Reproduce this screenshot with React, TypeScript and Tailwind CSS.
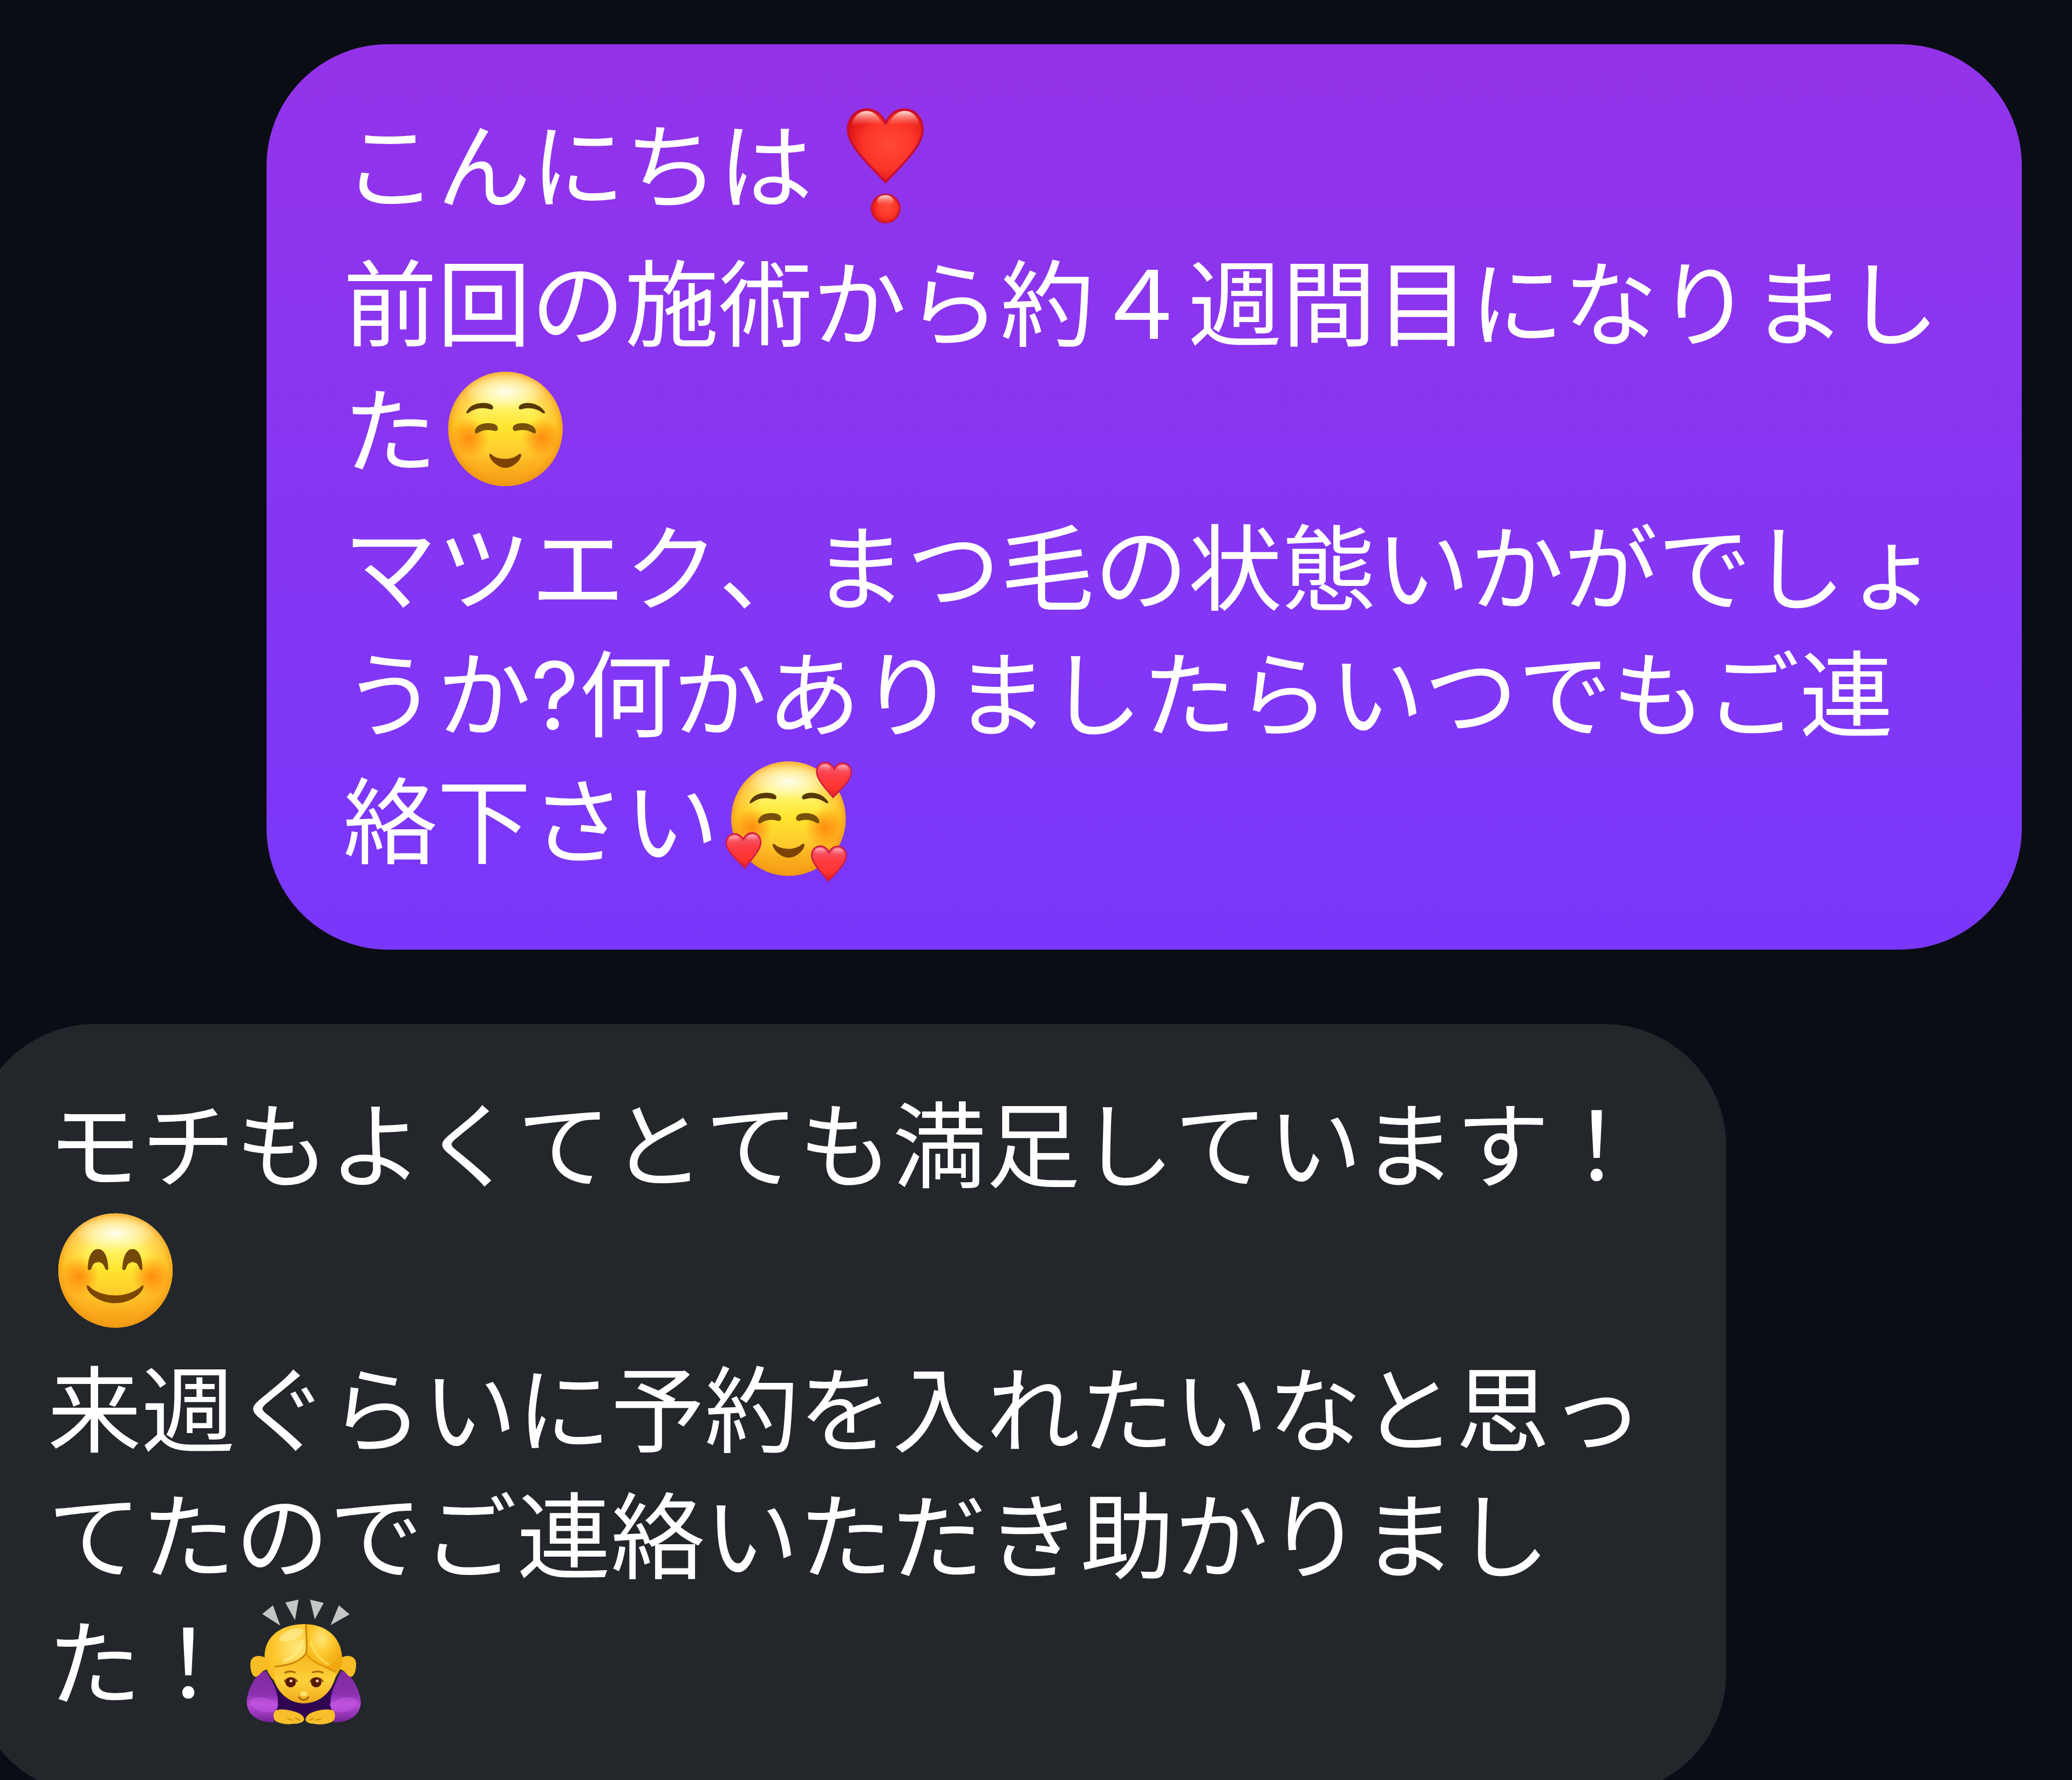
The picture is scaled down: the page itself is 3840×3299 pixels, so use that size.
import type { ReactNode } from "react";

const HEART = "M0 -62 C-14 -92 -42 -102 -64 -94 C-92 -84 -102 -54 -92 -24 C-80 14 -30 60 0 96 C30 60 80 14 92 -24 C102 -54 92 -84 64 -94 C42 -102 14 -92 0 -62 Z";

function Emoji({ label, viewBox, children }: { label: string; viewBox: string; children: ReactNode }) {
  return (
    <svg role="img" aria-label={label} viewBox={viewBox} className="inline-block size-64 align-[-75px] overflow-visible">
      {children}
    </svg>
  );
}

/* 顔の土台（グラデーション + ほっぺ） */
function Face({ id, cx, cy, cheekY }: { id: string; cx: number; cy: number; cheekY: number }) {
  return (
    <>
      <defs>
        <linearGradient id={`${id}-base`} x1="0" y1="0" x2="0" y2="1">
          <stop offset="0" stopColor="#fff2a0" />
          <stop offset="0.12" stopColor="#fff8b4" />
          <stop offset="0.3" stopColor="#fff46a" />
          <stop offset="0.48" stopColor="#ffe62e" />
          <stop offset="0.75" stopColor="#ffc62c" />
          <stop offset="1" stopColor="#e8960c" />
        </linearGradient>
        <radialGradient id={`${id}-edge`} cx="0.5" cy="0.48" r="0.52">
          <stop offset="0.5" stopColor="#ffa51a" stopOpacity="0" />
          <stop offset="0.85" stopColor="#ffa51a" stopOpacity="0.55" />
          <stop offset="1" stopColor="#ee9814" stopOpacity="1" />
        </radialGradient>
        <radialGradient id={`${id}-cheek`}>
          <stop offset="0" stopColor="#ff850c" stopOpacity="0.9" />
          <stop offset="0.5" stopColor="#ff8d10" stopOpacity="0.55" />
          <stop offset="1" stopColor="#ff9416" stopOpacity="0" />
        </radialGradient>
        <radialGradient id={`${id}-shine`}>
          <stop offset="0" stopColor="#fffdf0" stopOpacity="1" />
          <stop offset="0.6" stopColor="#fffab8" stopOpacity="0.6" />
          <stop offset="1" stopColor="#fff9b0" stopOpacity="0" />
        </radialGradient>
      </defs>
      <circle cx={cx} cy={cy} r="318" fill={`url(#${id}-base)`} />
      <circle cx={cx} cy={cy} r="318" fill={`url(#${id}-edge)`} />
      <ellipse cx={cx} cy={cy - 206} rx="224" ry="100" fill={`url(#${id}-shine)`} />
      <circle cx={cx - 202} cy={cheekY} r="112" fill={`url(#${id}-cheek)`} />
      <circle cx={cx + 202} cy={cheekY} r="112" fill={`url(#${id}-cheek)`} />
    </>
  );
}

/* 眉・閉じた目・小さな口 */
function SoftFeatures() {
  return (
    <>
      <g fill="#573806">
        <path d="M193 316 C205 282 242 264 285 263 C315 262 340 272 342 287 C343 299 334 302 322 298 C278 286 238 294 207 317 C199 323 190 322 193 316 Z" />
        <path d="M630 314 C612 284 578 264 536 263 C508 262 486 274 484 287 C483 299 491 302 502 298 C546 286 584 296 614 317 C624 324 633 322 630 314 Z" />
      </g>
      <g fill="#79500a">
        <path d="M240 424 C242 392 274 376 316 376 C350 376 368 388 368 405 C368 420 354 422 342 417 C312 410 282 414 259 429 C248 436 240 434 240 424 Z" />
        <path d="M580 424 C578 394 544 376 504 376 C470 376 451 388 451 404 C451 419 464 422 478 417 C508 410 538 414 562 429 C573 436 581 434 580 424 Z" />
      </g>
      <path d="M321 548 C328 542 335 552 345 560 C385 580 435 580 472 558 C485 548 492 541 498 551 C498 580 455 624 408 624 C362 622 318 574 321 548 Z" fill="#7c4304" />
    </>
  );
}

function MiniHeart({ x, y, r }: { x: number; y: number; r: number }) {
  return (
    <g transform={`translate(${x} ${y}) rotate(${r})`}>
      <path d={HEART} fill="url(#mini-heart)" stroke="#cf1c40" strokeWidth="8" />
      <ellipse cx="-50" cy="-68" rx="30" ry="18" fill="url(#mini-shine)" />
      <ellipse cx="50" cy="-68" rx="30" ry="18" fill="url(#mini-shine)" />
    </g>
  );
}

function HeartExclamation() {
  return (
    <Emoji label="❣️" viewBox="18 93 768 768">
      <defs>
        <radialGradient id="hx-fill" cx="0.55" cy="0.48" r="0.62">
          <stop offset="0" stopColor="#ff4a36" />
          <stop offset="0.55" stopColor="#fb3528" />
          <stop offset="1" stopColor="#d60d12" />
        </radialGradient>
        <linearGradient id="hx-shine" x1="0" y1="0" x2="0" y2="1">
          <stop offset="0" stopColor="#ffe3dc" />
          <stop offset="1" stopColor="#ff6a58" stopOpacity="0" />
        </linearGradient>
      </defs>
      <path
        d="M424 204 C402 146 356 123 314 125 C252 128 214 178 214 240 C214 330 346 446 424 530 C502 446 630 332 630 240 C630 174 590 126 530 125 C482 124 444 154 424 204 Z"
        fill="url(#hx-fill)" stroke="#c50f35" strokeWidth="12" strokeLinejoin="round"
      />
      <path d="M234 222 C238 168 276 134 318 134 C358 134 388 164 406 210 C350 196 280 200 234 222 Z" fill="url(#hx-shine)" />
      <path d="M442 210 C458 164 490 134 532 134 C576 134 608 170 612 222 C562 200 500 196 442 210 Z" fill="url(#hx-shine)" />
      <circle cx="424" cy="676" r="78" fill="url(#hx-fill)" stroke="#cc1732" strokeWidth="10" />
      <ellipse cx="422" cy="634" rx="46" ry="32" fill="url(#hx-shine)" />
    </Emoji>
  );
}

function RelaxedFace() {
  return (
    <Emoji label="☺️" viewBox="30 69 768 768">
      <Face id="relaxed" cx={410} cy={408} cheekY={458} />
      <SoftFeatures />
    </Emoji>
  );
}

function HeartsFace() {
  return (
    <Emoji label="🥰" viewBox="36 84 768 768">
      <defs>
        <linearGradient id="mini-heart" x1="0" y1="0" x2="0" y2="1">
          <stop offset="0" stopColor="#f2647a" />
          <stop offset="0.4" stopColor="#fb3c43" />
          <stop offset="0.75" stopColor="#ff3430" />
          <stop offset="1" stopColor="#d81a2c" />
        </linearGradient>
        <linearGradient id="mini-shine" x1="0" y1="0" x2="0" y2="1">
          <stop offset="0" stopColor="#ffb0bd" />
          <stop offset="1" stopColor="#ff7482" stopOpacity="0.1" />
        </linearGradient>
      </defs>
      <Face id="hearts" cx={424} cy={418} cheekY={468} />
      <g transform="translate(15 11)">
        <SoftFeatures />
      </g>
      <MiniHeart x={675} y={204} r={2} />
      <MiniHeart x={176} y={596} r={-3} />
      <MiniHeart x={648} y={668} r={1} />
    </Emoji>
  );
}

function SmilingFace() {
  return (
    <Emoji label="😊" viewBox="24 48 768 768">
      <Face id="smiling" cx={402} cy={386} cheekY={420} />
      <g fill="#b0690f">
        <path d="M268 352 C276 296 336 296 346 352 L306 340 Z" />
        <path d="M460 352 C468 296 528 296 538 352 L497 340 Z" />
      </g>
      <g fill="#74480a">
        <path d="M248 374 C250 304 274 267 304 267 C338 267 360 306 362 374 C362 387 349 386 345 376 C334 348 322 336 305 336 C288 336 276 350 268 376 C264 387 248 386 248 374 Z" />
        <path d="M440 374 C444 304 466 267 496 267 C530 267 550 306 552 374 C552 387 540 386 536 376 C526 348 514 336 497 336 C480 336 468 350 460 376 C456 387 440 386 440 374 Z" />
      </g>
      <path d="M242 470 C248 464 256 474 266 484 C340 538 458 538 534 484 C546 474 552 464 558 471 C558 510 488 568 400 568 C310 568 240 510 242 470 Z" fill="#7c4703" />
    </Emoji>
  );
}

function BowingWoman() {
  return (
    <Emoji label="🙇‍♀️" viewBox="18 78 768 768">
      <defs>
        <linearGradient id="bow-sleeve" x1="0" y1="0" x2="0" y2="1">
          <stop offset="0" stopColor="#7f2ba0" />
          <stop offset="0.45" stopColor="#8a2fae" />
          <stop offset="0.66" stopColor="#b84bd8" />
          <stop offset="1" stopColor="#762299" />
        </linearGradient>
        <radialGradient id="bow-hair" cx="0.42" cy="0.3" r="0.65">
          <stop offset="0" stopColor="#ffe77a" />
          <stop offset="0.5" stopColor="#fdc62c" />
          <stop offset="1" stopColor="#f2a810" />
        </radialGradient>
        <linearGradient id="bow-face" x1="0" y1="0" x2="0" y2="1">
          <stop offset="0" stopColor="#f4b41c" />
          <stop offset="0.55" stopColor="#ffd13a" />
          <stop offset="1" stopColor="#efab1c" />
        </linearGradient>
      </defs>
      <g fill="#c4c6c4">
        <path d="M168 154 L228 106 L268 218 Z" />
        <path d="M296 90 L370 74 L350 188 Z" />
        <path d="M434 74 L510 92 L460 184 Z" />
        <path d="M594 106 L654 156 L548 216 Z" />
      </g>
      <path d="M210 540 L590 540 L572 700 L400 735 L230 700 Z" fill="#300552" />
      <path d="M190 470 C130 478 84 580 82 642 C82 704 130 758 232 756 L240 700 C262 676 262 606 228 540 Z" fill="url(#bow-sleeve)" />
      <path d="M606 470 C662 478 714 580 716 642 C716 704 668 758 566 756 L560 700 C540 676 544 606 574 540 Z" fill="url(#bow-sleeve)" />
      <path d="M100 640 C112 606 198 612 256 652 C262 674 236 684 226 700 C180 706 112 690 100 640 Z" fill="#c65be6" opacity="0.5" />
      <path d="M698 640 C686 606 600 612 544 652 C540 674 564 684 574 700 C620 706 686 690 698 640 Z" fill="#c65be6" opacity="0.5" />
      <path d="M186 398 C148 376 104 386 102 430 C102 470 112 502 132 504 C152 500 160 470 196 462 Z" fill="#f8bd24" />
      <path d="M606 398 C642 376 688 386 690 430 C690 470 680 502 660 504 C640 500 634 470 600 462 Z" fill="#f8bd24" />
      <path d="M182 410 C170 290 262 212 398 210 C532 210 614 290 612 412 C612 452 586 490 568 520 C536 604 470 650 400 650 C326 650 260 602 232 522 C202 492 184 450 182 410 Z" fill="url(#bow-hair)" />
      <path d="M232 450 C310 440 380 414 412 372 C450 420 520 440 580 476 C566 584 490 650 400 650 C310 650 232 580 232 450 Z" fill="url(#bow-face)" />
      <path d="M412 212 C414 270 424 330 414 372 C444 424 512 446 578 478 C600 462 612 436 612 400 C606 296 538 218 412 212 Z" fill="url(#bow-hair)" />
      <path d="M412 214 C410 280 420 330 412 372 C374 428 300 440 240 446" fill="none" stroke="#c88408" strokeWidth="9" strokeLinecap="round" />
      <path d="M414 374 C444 430 520 444 576 478" fill="none" stroke="#dc940c" strokeWidth="8" strokeLinecap="round" />
      <ellipse cx="330" cy="270" rx="70" ry="28" transform="rotate(-22 330 270)" fill="#fff0a0" opacity="0.6" />
      <path d="M390 310 C384 360 344 400 290 412" fill="none" stroke="#ffef8c" strokeWidth="18" strokeLinecap="round" opacity="0.6" />
      <path d="M440 310 C452 366 490 408 534 432" fill="none" stroke="#ffe76c" strokeWidth="14" strokeLinecap="round" opacity="0.6" />
      <path d="M296 480 C312 472 332 472 348 478" fill="none" stroke="#a86a06" strokeWidth="10" strokeLinecap="round" />
      <path d="M450 478 C468 472 488 472 504 480" fill="none" stroke="#a86a06" strokeWidth="10" strokeLinecap="round" />
      <path d="M292 532 C300 506 346 500 364 532" fill="none" stroke="#8a4a08" strokeWidth="9" />
      <path d="M434 532 C448 500 496 506 506 532" fill="none" stroke="#8a4a08" strokeWidth="9" />
      <ellipse cx="326" cy="534" rx="29" ry="28" fill="#571807" />
      <ellipse cx="468" cy="534" rx="29" ry="28" fill="#571807" />
      <circle cx="328" cy="526" r="8" fill="#f2d3b0" />
      <circle cx="474" cy="526" r="8" fill="#f2d3b0" />
      <path d="M374 618 C386 636 412 636 424 618" fill="none" stroke="#b06c08" strokeWidth="12" strokeLinecap="round" />
      <ellipse cx="399" cy="598" rx="20" ry="15" fill="#ffe070" />
      <path d="M238 694 C262 676 330 688 372 706 C396 718 408 736 396 750 C372 768 350 762 330 766 C300 770 244 760 236 742 C228 722 230 704 238 694 Z" fill="#f9bf2a" />
      <path d="M566 694 C542 676 472 688 436 706 C414 718 404 738 412 750 C430 768 456 762 478 768 C508 770 560 760 568 742 C576 722 572 704 566 694 Z" fill="#f9bf2a" />
      <path d="M310 736 L336 744 M352 734 L376 744 M494 736 L468 744 M452 734 L430 744" stroke="#d6900e" strokeWidth="7" strokeLinecap="round" />
    </Emoji>
  );
}

export default function App() {
  return (
    <main
      lang="ja"
      className="flex h-screen flex-col gap-[138px] overflow-hidden bg-[#0a0d14] pt-[82px] font-['Inter','Noto_Sans_CJK_JP',sans-serif] text-[174px] leading-[234px] text-white [font-kerning:none]"
    >
      {/* 送信メッセージ */}
      <section className="mr-[93px] ml-[494px] shrink-0 rounded-[225px] bg-linear-to-b from-[#9333e9] to-[#7937fb] px-[142px] pt-[110px] pb-[98px]">
        <p>
          こんにちは
          <HeartExclamation />
        </p>
        <p>
          前回の施術から約４週間目になりました
          <RelaxedFace />
        </p>
        <p>
          マツエク、まつ毛の状態いかがでしょうか?何かありましたらいつでもご連絡下さい
          <HeartsFace />
        </p>
      </section>

      {/* 受信メッセージ */}
      <section className="mr-[641px] -ml-[50px] shrink-0 rounded-[225px] bg-[#23262b] px-[138px] pt-[110px] pb-[104px]">
        <p>
          モチもよくてとても満足しています！
          <SmilingFace />
        </p>
        <p>
          来週ぐらいに予約を入れたいなと思ってたのでご連絡いただき助かりました！
          <BowingWoman />
        </p>
      </section>
    </main>
  );
}
